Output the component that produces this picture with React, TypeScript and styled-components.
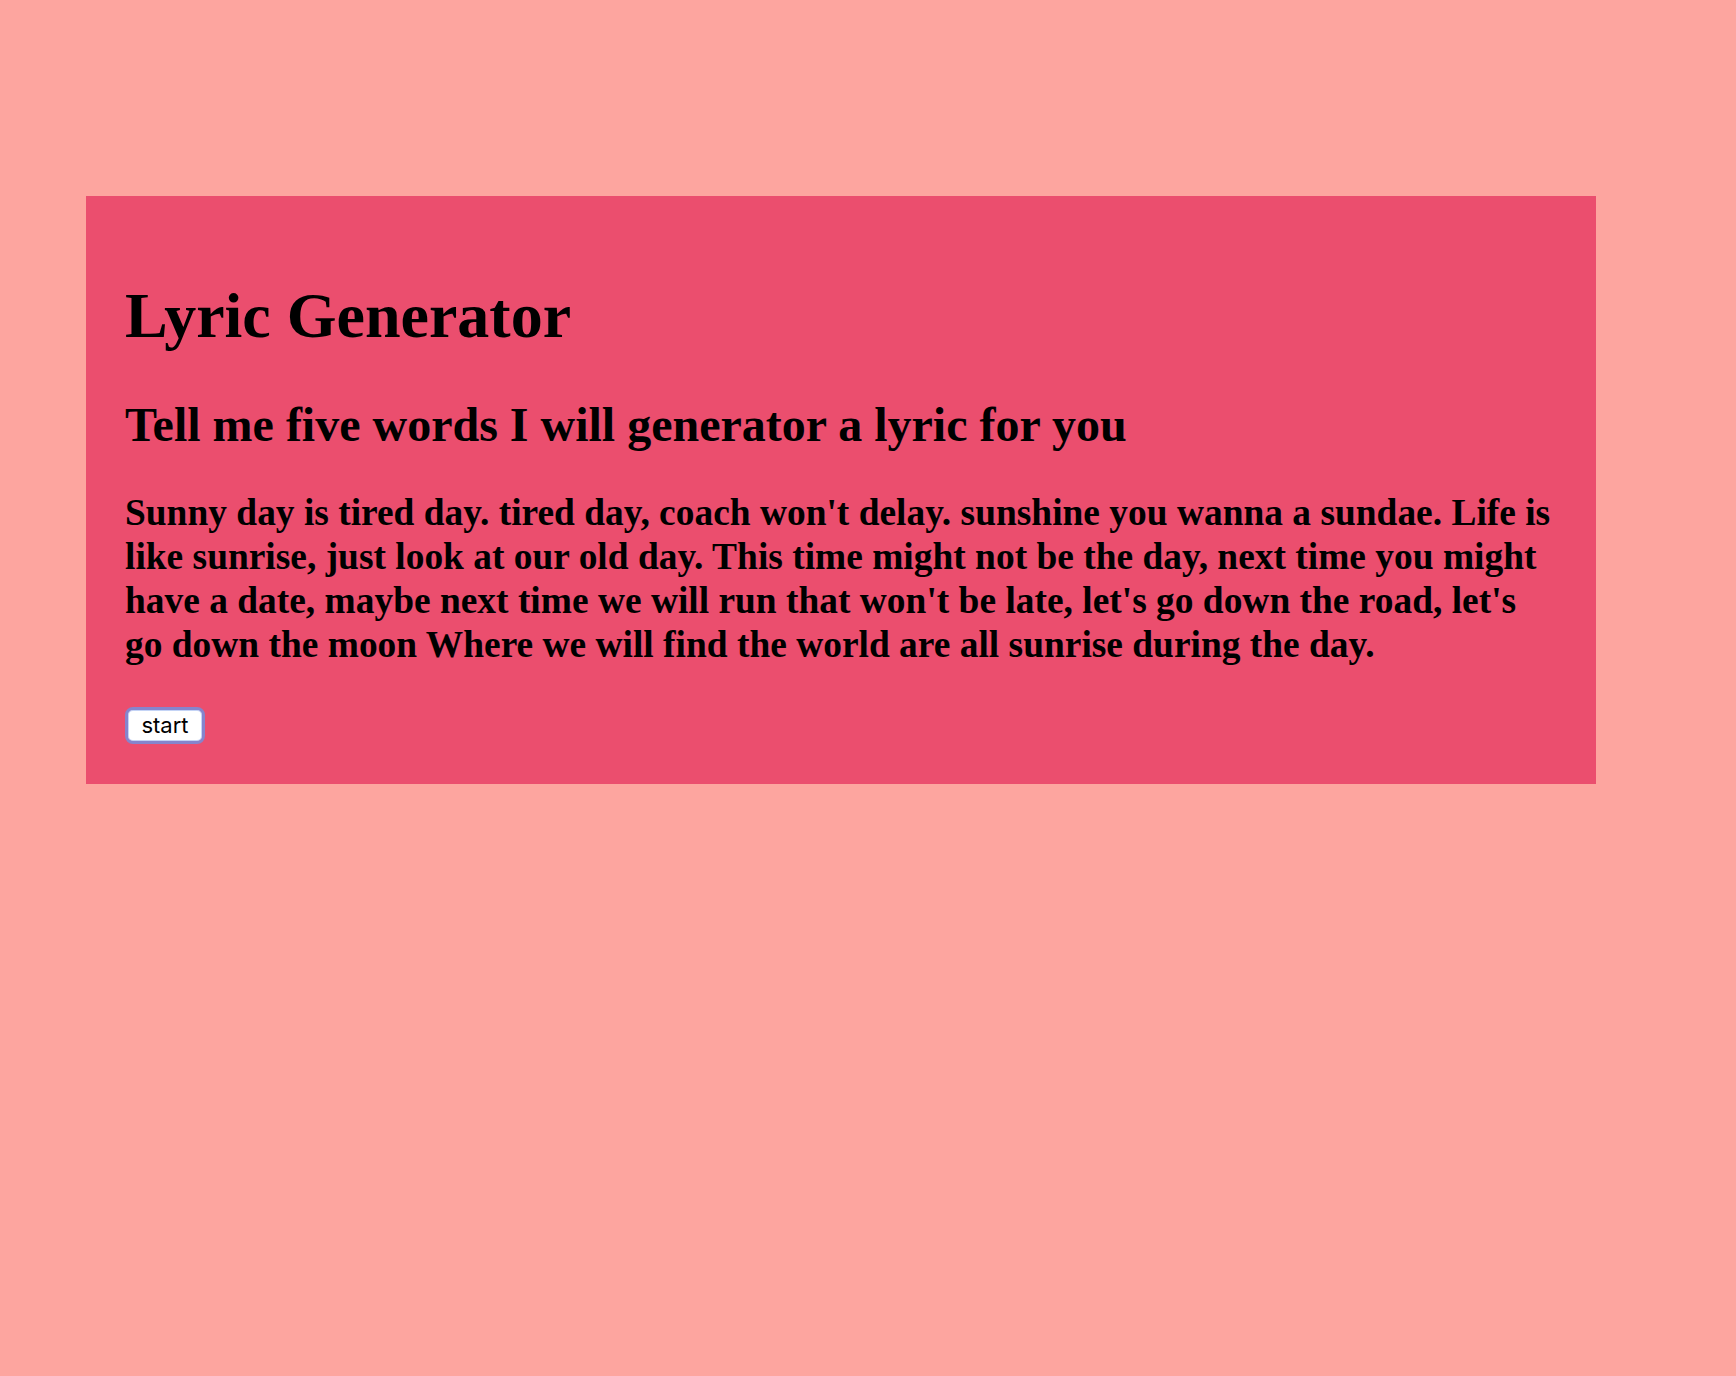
import React from "react";
import styled, { createGlobalStyle } from "styled-components";

const GlobalStyle = createGlobalStyle`
    html, body {
        margin: 0;
        padding: 0;
        background-color: #fda59f;
    }
    body {
        min-height: 1376px;
        font-family: "Liberation Serif", "Times New Roman", serif;
        color: #000;
    }
`;

const Page = styled.div`
    width: 100%;
    padding-top: 196px;
    padding-left: 86px;
    box-sizing: border-box;
`;

const Panel = styled.div`
    width: 1510px;
    box-sizing: border-box;
    background-color: #eb4e6e;
    padding: 83px 41px 40px 39px;
`;

const Title = styled.h1`
    font-size: 64px;
    font-weight: bold;
    line-height: 1.15;
    margin: 0 0 44px;
`;

const Subtitle = styled.h2`
    font-size: 48px;
    font-weight: bold;
    line-height: 1.15;
    margin: 0 0 39px;
`;

const Lyric = styled.h3`
    font-size: 37.44px;
    font-weight: bold;
    line-height: 44px;
    margin: 0 0 40px;
`;

const StartButton = styled.button`
    display: block;
    box-sizing: border-box;
    width: 80px;
    height: 37px;
    padding: 0;
    background: #fff;
    border: 3px solid #8684cc;
    border-radius: 8px;
    box-shadow: inset 0 0 0 1px #c4d4f6;
    font-family: Inter, "Liberation Sans", sans-serif;
    font-size: 22px;
    line-height: 28px;
    color: #000;
    cursor: pointer;
`;

function App() {
    return (
        <>
            <GlobalStyle />
            <Page>
                <Panel>
                    <Title>Lyric Generator</Title>
                    <Subtitle>Tell me five words I will generator a lyric for you</Subtitle>
                    <Lyric>
                        Sunny day is tired day. tired day, coach won't delay. sunshine you wanna a sundae. Life is
                        like sunrise, just look at our old day. This time might not be the day, next time you might
                        have a date, maybe next time we will run that won't be late, let's go down the road, let's
                        go down the moon Where we will find the world are all sunrise during the day.
                    </Lyric>
                    <StartButton>start</StartButton>
                </Panel>
            </Page>
        </>
    );
}

export default App;
